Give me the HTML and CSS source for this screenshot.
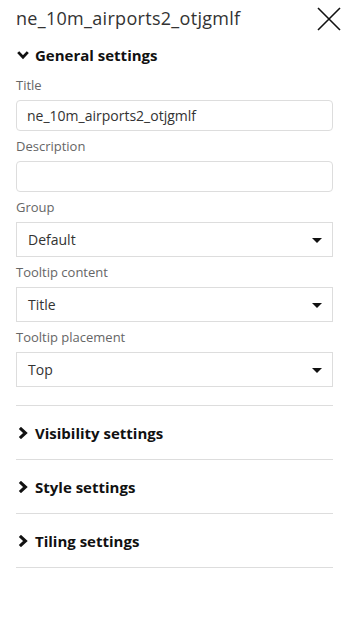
FILE: index.html
```html
<!DOCTYPE html>
<html lang="en">
<head>
    <meta charset="UTF-8">
    <meta name="viewport" content="width=device-width, initial-scale=1.0">
    <title>Layer settings</title>
    <link rel="stylesheet" href="styles.css">
</head>
<body>
    <div class="panel">
        <div class="panel-header">
            <div class="panel-title">ne_10m_airports2_otjgmlf</div>
            <button class="close-btn" aria-label="Close">
                <svg width="24" height="24" viewBox="0 0 24 24">
                    <path d="M1 1 L23 23 M23 1 L1 23" stroke="#111" stroke-width="1.6" fill="none"/>
                </svg>
            </button>
        </div>

        <!-- General settings -->
        <div class="section open">
            <div class="section-head">
                <svg class="chevron" width="12" height="12" viewBox="0 0 10 10">
                    <path d="M1 2.6 L5 6.8 L9 2.6" stroke="#111" stroke-width="2.4" fill="none"/>
                </svg>
                <span>General settings</span>
            </div>
            <div class="field">
                <label>Title</label>
                <input class="text-input" type="text" value="ne_10m_airports2_otjgmlf">
            </div>
            <div class="field">
                <label>Description</label>
                <input class="text-input" type="text" value="">
            </div>
            <div class="field">
                <label>Group</label>
                <div class="select">Default<span class="caret"></span></div>
            </div>
            <div class="field">
                <label>Tooltip content</label>
                <div class="select">Title<span class="caret"></span></div>
            </div>
            <div class="field">
                <label>Tooltip placement</label>
                <div class="select">Top<span class="caret"></span></div>
            </div>
        </div>

        <div class="section">
            <div class="section-head">
                <svg class="chevron" width="12" height="12" viewBox="0 0 10 10">
                    <path d="M2.4 0.8 L7 5 L2.4 9.2" stroke="#111" stroke-width="2.6" fill="none"/>
                </svg>
                <span>Visibility settings</span>
            </div>
        </div>
        <div class="section">
            <div class="section-head">
                <svg class="chevron" width="12" height="12" viewBox="0 0 10 10">
                    <path d="M2.4 0.8 L7 5 L2.4 9.2" stroke="#111" stroke-width="2.6" fill="none"/>
                </svg>
                <span>Style settings</span>
            </div>
        </div>
        <div class="section">
            <div class="section-head">
                <svg class="chevron" width="12" height="12" viewBox="0 0 10 10">
                    <path d="M2.4 0.8 L7 5 L2.4 9.2" stroke="#111" stroke-width="2.6" fill="none"/>
                </svg>
                <span>Tiling settings</span>
            </div>
        </div>
    </div>
</body>
</html>
```

FILE: styles.css
```css
body {
    margin: 0;
    padding: 0;
    background: #fff;
    font-family: 'Open Sans', 'DejaVu Sans', sans-serif;
    color: #222;
}
.panel {
    padding: 0 12px 16px 16px;
}
.panel-header {
    display: flex;
    justify-content: space-between;
    align-items: center;
    height: 36px;
    margin-right: -8px;
}
.panel-title {
    font-size: 18px;
    letter-spacing: 0.3px;
    color: #333;
}
.close-btn {
    background: none;
    border: none;
    padding: 0;
    width: 24px;
    height: 24px;
    margin-top: 2px;
}
.close-btn svg {
    display: block;
}
.section {
    border-bottom: 1px solid #ddd;
    width: 317px;
}
.section.open {
    padding-bottom: 18px;
}
.section-head {
    display: flex;
    align-items: center;
    gap: 6px;
    height: 53px;
    font-size: 15px;
    font-weight: 700;
    color: #111;
    padding-left: 1px;
}
.section.open .section-head {
    height: 30px;
    margin-top: 4px;
}
.field label {
    display: block;
    font-size: 13px;
    color: #666;
    line-height: 16px;
    margin: 7px 0 7px;
}
.text-input {
    display: block;
    box-sizing: border-box;
    width: 100%;
    height: 31px;
    border: 1px solid #ddd;
    border-radius: 4px;
    padding: 0 10px;
    font-family: inherit;
    font-size: 14px;
    color: #333;
    outline: none;
}
.select {
    position: relative;
    box-sizing: border-box;
    height: 35px;
    border: 1px solid #ddd;
    display: flex;
    align-items: center;
    padding: 0 11px;
    font-size: 14px;
    color: #333;
}
.caret {
    position: absolute;
    right: 10px;
    top: 15px;
    border-left: 5px solid transparent;
    border-right: 5px solid transparent;
    border-top: 5px solid #111;
}
```
